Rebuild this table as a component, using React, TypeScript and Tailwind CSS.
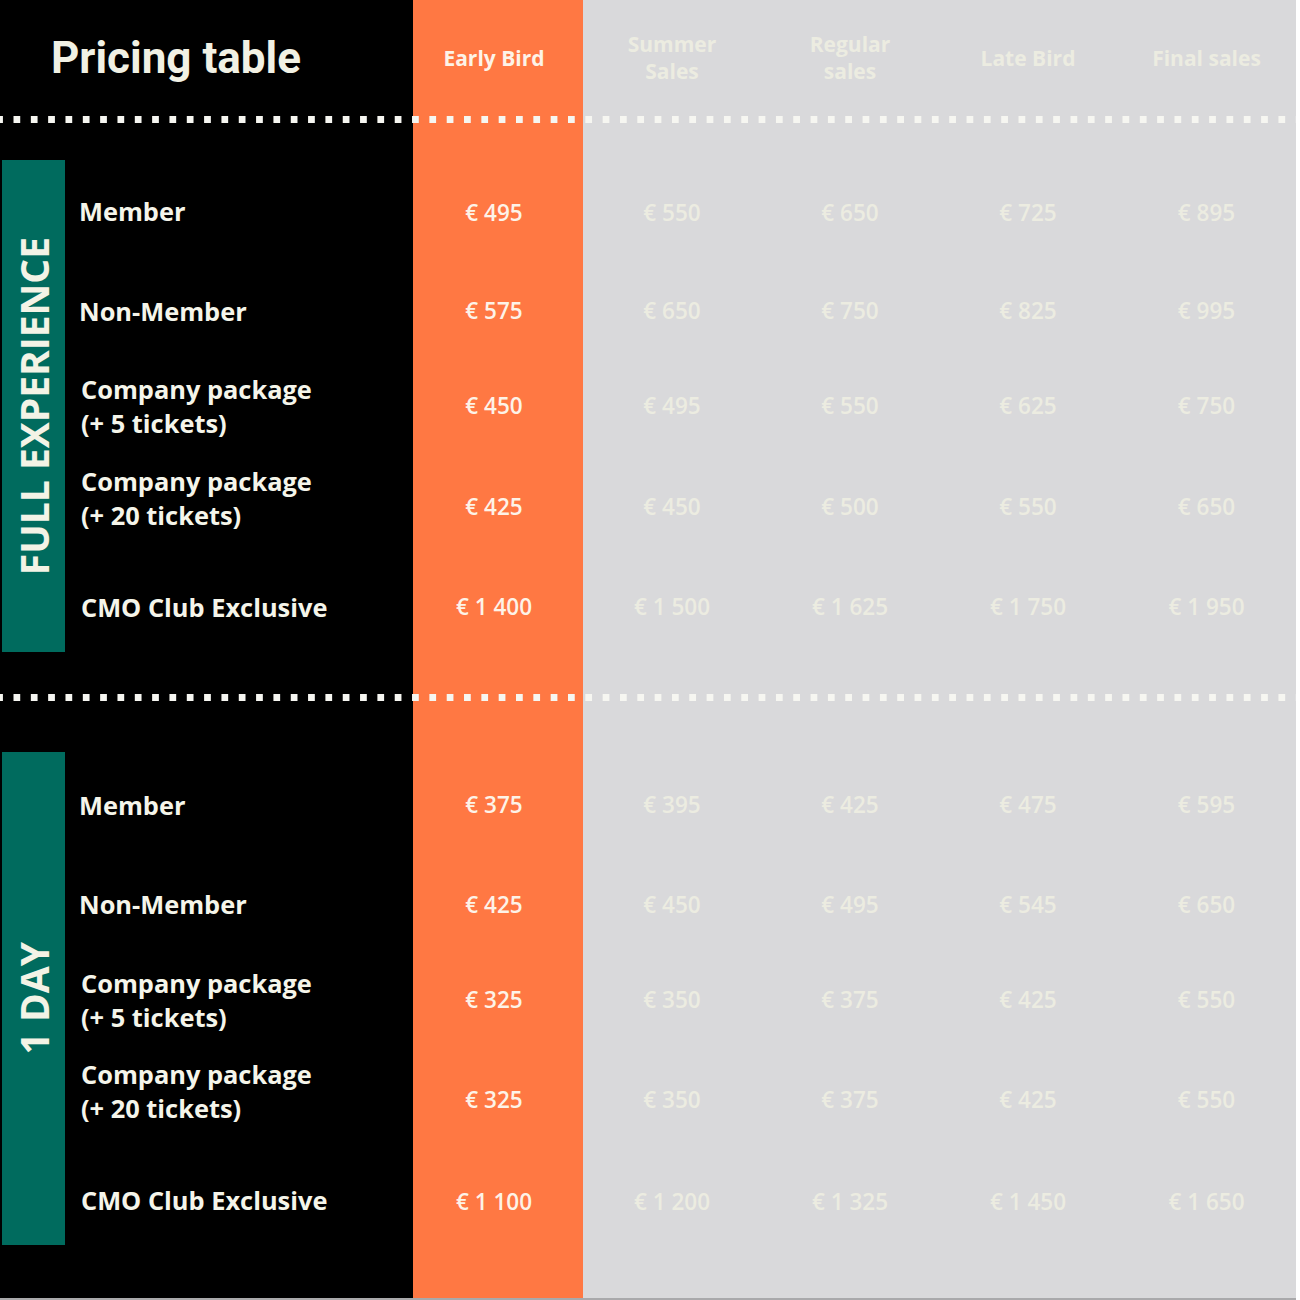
const PHASES = ["Early Bird", "Summer\nSales", "Regular\nsales", "Late Bird", "Final sales"];

type Row = {
  label: string;
  prices: string[];
  h: string;
  labelPad?: string;
  pricePad?: string;
  labelIndent?: string;
};

const fullExperience: Row[] = [
  { label: "Member", prices: ["€ 495", "€ 550", "€ 650", "€ 725", "€ 895"], h: "h-[102px]", labelIndent: "pl-[14px]", pricePad: "pt-[3px]" },
  { label: "Non-Member", prices: ["€ 575", "€ 650", "€ 750", "€ 825", "€ 995"], h: "h-[98px]", labelIndent: "pl-[14px]" },
  { label: "Company package\n(+ 5 tickets)", prices: ["€ 450", "€ 495", "€ 550", "€ 625", "€ 750"], h: "h-[92px]" },
  { label: "Company package\n(+ 20 tickets)", prices: ["€ 425", "€ 450", "€ 500", "€ 550", "€ 650"], h: "h-[104px]", labelPad: "pb-[12px]", pricePad: "pt-[6px]" },
  { label: "CMO Club Exclusive", prices: ["€ 1 400", "€ 1 500", "€ 1 625", "€ 1 750", "€ 1 950"], h: "h-[96px]", labelPad: "pt-[6px]", pricePad: "pt-[6px]" },
];

const oneDay: Row[] = [
  { label: "Member", prices: ["€ 375", "€ 395", "€ 425", "€ 475", "€ 595"], h: "h-[106px]", labelIndent: "pl-[14px]" },
  { label: "Non-Member", prices: ["€ 425", "€ 450", "€ 495", "€ 545", "€ 650"], h: "h-[92px]", labelIndent: "pl-[14px]", pricePad: "pt-[2px]" },
  { label: "Company package\n(+ 5 tickets)", prices: ["€ 325", "€ 350", "€ 375", "€ 425", "€ 550"], h: "h-[100px]" },
  { label: "Company package\n(+ 20 tickets)", prices: ["€ 325", "€ 350", "€ 375", "€ 425", "€ 550"], h: "h-[100px]", labelPad: "pb-[18px]" },
  { label: "CMO Club Exclusive", prices: ["€ 1 100", "€ 1 200", "€ 1 325", "€ 1 450", "€ 1 650"], h: "h-[95px]", labelPad: "pt-[5px]", pricePad: "pt-[8px]" },
];

const colWidths = ["w-[170px] pr-[8px]", "w-[178px]", "w-[178px]", "w-[178px]", "w-[179px]"];

function Dots() {
  return (
    <div className="flex h-[14px] items-center">
      <div className="h-[7px] w-[1296px] bg-[linear-gradient(to_right,#f6f6f1_0_7px,transparent_7px)] bg-[length:17.33px_7px] bg-[position:13.5px_0] bg-repeat-x" />
    </div>
  );
}

function Section({
  title,
  rows,
  pad,
}: Readonly<{ title: string; rows: Row[]; pad: string }>) {
  return (
    <div className={`flex ${pad}`}>
      <div className="w-[65px] pl-[2px]">
        <div className="flex h-full items-center justify-center bg-[#006b5e]">
          <span className="rotate-180 text-[39px] font-bold leading-none text-[#f3f3e6] [writing-mode:vertical-rl]">
            {title}
          </span>
        </div>
      </div>
      <div className="flex flex-col">
        {rows.map((r) => (
          <div className={`flex ${r.h}`} key={r.label}>
            <div
              className={`flex w-[348px] items-center whitespace-pre-line text-[25.4px] font-bold leading-[34px] text-[#f5f5ea] ${
                r.labelIndent ?? "pl-[16px]"
              } ${r.labelPad ?? ""}`}
            >
              {r.label}
            </div>
            {r.prices.map((p, i) => (
              <div
                className={`flex items-center justify-center text-[22.5px] font-semibold ${colWidths[i]} ${
                  i === 0 ? "text-[#fdf3e8]" : "text-[#ecece1]"
                } ${r.pricePad ?? ""}`}
                key={i}
              >
                {p}
              </div>
            ))}
          </div>
        ))}
      </div>
    </div>
  );
}

export default function App() {
  return (
    <div className="w-[1300px] bg-white font-['Open_Sans',sans-serif]">
      <div className="h-[1298px] bg-[linear-gradient(to_right,#000_0_413px,#ff7843_413px_583px,#d9d9db_583px_1296px,#fff_1296px)]">
        <div className="flex h-[112px]">
          <div className="flex w-[413px] items-center pl-[51px]">
            <h1 className="pt-[4px] font-['Roboto',sans-serif] text-[44px] font-bold text-[#f1f1e4]">
              Pricing table
            </h1>
          </div>
          {PHASES.map((ph, i) => (
            <div
              className={`flex items-center justify-center whitespace-pre-line pt-[4px] text-center text-[21px] font-bold leading-[27px] ${colWidths[i]} ${
                i === 0 ? "text-[#fdf3e8]" : "text-[#ecece1]"
              }`}
              key={ph}
            >
              {ph}
            </div>
          ))}
        </div>
        <Dots />
        <Section pad="pt-[34px] pb-[38px]" rows={fullExperience} title="FULL EXPERIENCE" />
        <Dots />
        <Section pad="pt-[48px]" rows={oneDay} title="1 DAY" />
      </div>
      <div className="h-[2px] w-[1296px] bg-[#a9a9ab]" />
    </div>
  );
}
